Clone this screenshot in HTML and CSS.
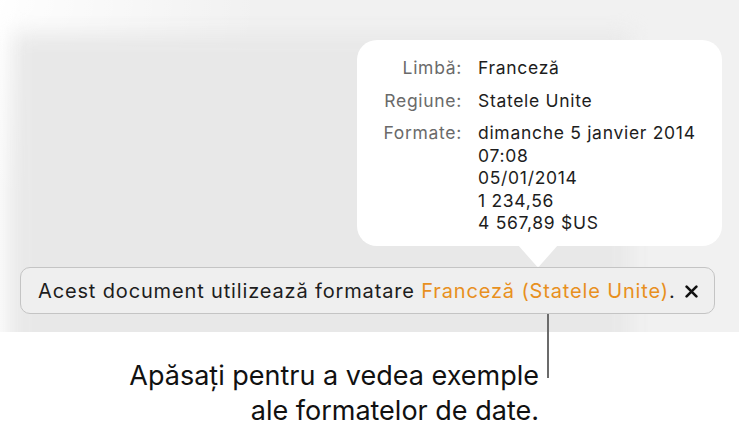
FILE: index.html
```html
<!DOCTYPE html>
<html lang="ro">
<head>
<meta charset="utf-8">
<title>Formatare</title>
<link rel="stylesheet" href="styles.css">
</head>
<body>
<div class="page">
  <div class="stage">
    <div class="popup">
      <div class="row">
        <div class="label">Limbă:</div>
        <div class="value">Franceză</div>
      </div>
      <div class="row">
        <div class="label">Regiune:</div>
        <div class="value">Statele Unite</div>
      </div>
      <div class="row">
        <div class="label">Formate:</div>
        <div class="value">dimanche 5 janvier 2014<br>07:08<br>05/01/2014<br>1 234,56<br>4 567,89 $US</div>
      </div>
    </div>
    <div class="bar">
      <span class="msg">Acest document utilizează formatare <span class="accent">Franceză (Statele Unite)</span>.</span>
      <svg class="close" width="12" height="12" viewBox="0 0 12 12" aria-hidden="true"><path d="M1.5 1.5 L10.5 10.5 M10.5 1.5 L1.5 10.5" stroke="#111" stroke-width="2.4" stroke-linecap="round"/></svg>
    </div>
  </div>
  <div class="callout-line"></div>
  <p class="caption">Apăsați pentru a vedea exemple<br>ale formatelor de date.</p>
</div>
</body>
</html>
```
FILE: styles.css
```css
html, body {
  margin: 0;
  padding: 0;
  background: #ffffff;
}
body {
  font-family: Inter, "Liberation Sans", sans-serif;
  color: #1d1d1d;
}
.page {
  position: relative;
  width: 739px;
  height: 434px;
  overflow: hidden;
}
.stage {
  position: relative;
  height: 332px;
  box-sizing: border-box;
  padding: 267px 24px 0 20px;
  background-color: #f1f1f1;
  background-image:
    radial-gradient(ellipse 260px 200px at 0 0, rgba(255,255,255,0.95), rgba(255,255,255,0) 100%),
    linear-gradient(to right, rgba(255,255,255,0.7) 0, rgba(255,255,255,0) 22px);
  overflow: hidden;
}
.stage::before {
  content: "";
  position: absolute;
  left: 14px;
  top: 34px;
  width: 616px;
  height: 330px;
  background: #e8e8e8;
  filter: blur(10px);
}
.popup {
  position: absolute;
  left: 357px;
  top: 40px;
  width: 365px;
  height: 206px;
  box-sizing: border-box;
  padding: 17px 20px 0 0;
  background: #ffffff;
  border-radius: 20px;
  display: flex;
  flex-direction: column;
  gap: 10px;
  font-size: 17.5px;
  letter-spacing: 0.7px;
  line-height: 22.5px;
  z-index: 2;
}
.popup::after {
  content: "";
  position: absolute;
  left: 161px;
  bottom: -21px;
  width: 40px;
  height: 22px;
  background: #ffffff;
  clip-path: polygon(0 0, 100% 0, 53% 97%, 50% 100%, 47% 97%);
}
.row {
  display: grid;
  grid-template-columns: 105px 1fr;
  column-gap: 16px;
}
.label {
  text-align: right;
  color: #6a6a6a;
}
.value {
  color: #1d1d1d;
}
.bar {
  position: relative;
  z-index: 1;
  height: 47px;
  box-sizing: border-box;
  display: flex;
  align-items: center;
  justify-content: space-between;
  padding: 0 16px 0 17px;
  background: #efefef;
  border: 1px solid #c4c4c4;
  border-radius: 10px;
  font-size: 20px;
  letter-spacing: 0.85px;
  color: #1d1d1d;
}
.accent {
  color: #e8901e;
}
.close {
  display: block;
  width: 13px;
  height: 13px;
  margin-top: 2px;
}
.callout-line {
  position: absolute;
  left: 547px;
  top: 314px;
  width: 2px;
  height: 64px;
  background: #6b6b6b;
  z-index: 3;
}
.caption {
  margin: 0;
  padding-top: 26px;
  width: 539px;
  text-align: right;
  font-size: 27px;
  line-height: 35px;
  color: #111111;
}
```
